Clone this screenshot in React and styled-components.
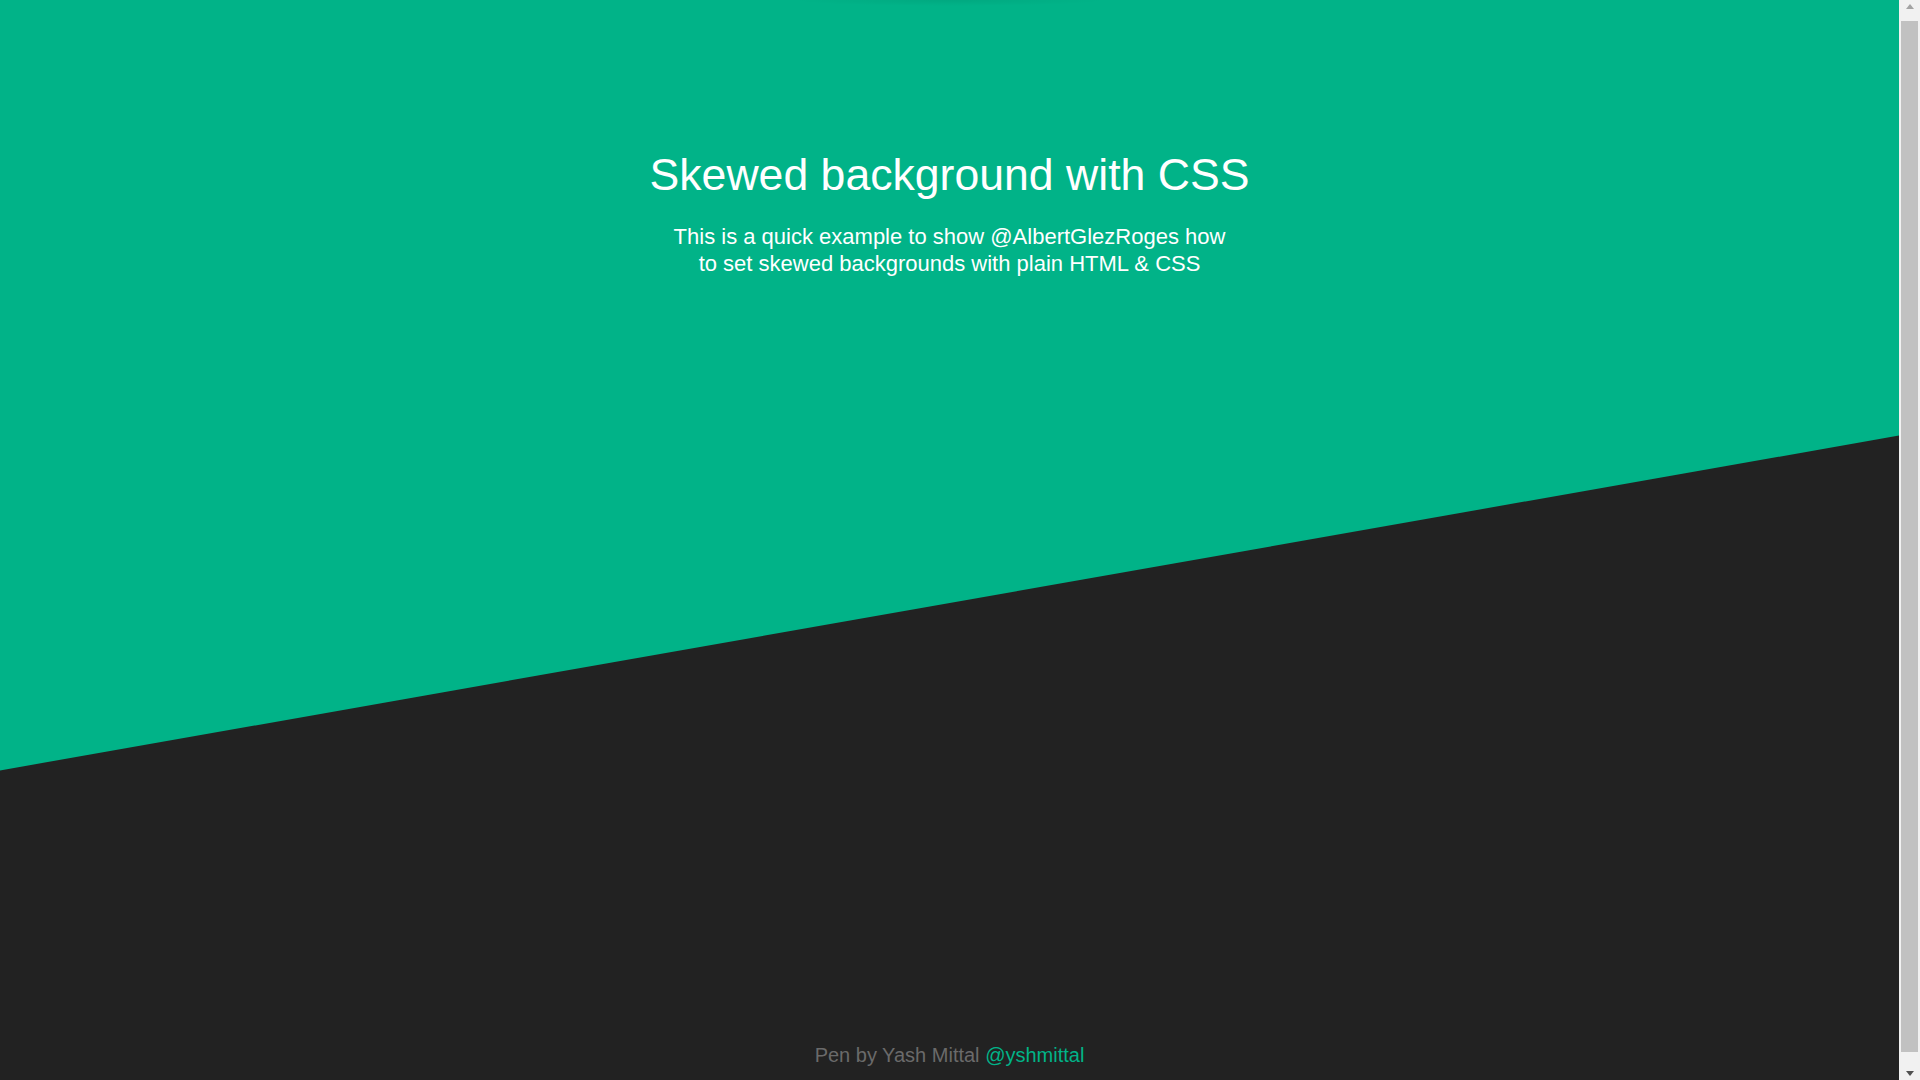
import styled, { createGlobalStyle } from "styled-components"

const GREEN = "#01b388"
const DARK = "#222222"

const GlobalStyle = createGlobalStyle`
    html, body {
        margin: 0;
        padding: 0;
        background: ${DARK};
        overflow: hidden;
    }

    body {
        font-family: "Liberation Sans", Arial, Helvetica, sans-serif;
    }
`

export default function App() {
    return (
        <Shell>
            <GlobalStyle />
            <Page>
                <Hero>
                    <Title>Skewed background with CSS</Title>
                    <Intro>
                        This is a quick example to show @AlbertGlezRoges how to set skewed backgrounds with plain HTML
                        &amp; CSS
                    </Intro>
                </Hero>
                <Footer>
                    Pen by Yash Mittal <a href="#">@yshmittal</a>
                </Footer>
            </Page>
            <ScrollBar>
                <Arrow $dir="up" />
                <Thumb />
                <Arrow $dir="down" />
            </ScrollBar>
        </Shell>
    )
}

const Shell = styled.div`
    display: flex;
    height: 100vh;
    overflow: hidden;
`

const Page = styled.div`
    flex: 1;
    box-sizing: border-box;
    min-height: 1110px;
    display: flex;
    flex-direction: column;
    background: ${DARK};
    color: #fff;
    overflow: hidden;
`

const Hero = styled.section`
    position: relative;
    box-sizing: border-box;
    height: 603px;
    padding-top: 149px;
    text-align: center;
    z-index: 0;

    &::before {
        content: "";
        position: absolute;
        top: -500px;
        left: 0;
        right: 0;
        bottom: 0;
        background: ${GREEN};
        transform: skewY(-10deg);
        transform-origin: 50% 100%;
        z-index: -1;
    }

    &::after {
        content: "";
        position: absolute;
        top: 0;
        left: 50%;
        width: 320px;
        height: 6px;
        margin-left: -160px;
        background: radial-gradient(ellipse at 50% 0%, rgba(0, 0, 0, 0.06), rgba(0, 0, 0, 0) 70%);
        z-index: -1;
    }
`

const Title = styled.h1`
    margin: 0;
    font-size: 44.6px;
    font-weight: normal;
    line-height: 1.15;
`

const Intro = styled.p`
    max-width: 560px;
    margin: 23px auto 0;
    font-size: 22px;
    line-height: 27px;
`

const Footer = styled.footer`
    margin-top: auto;
    padding-bottom: 43px;
    text-align: center;
    font-size: 20px;
    line-height: 23px;
    color: #6a6a6a;

    a {
        color: ${GREEN};
        text-decoration: none;
    }
`

const ScrollBar = styled.div`
    flex: 0 0 21px;
    display: flex;
    flex-direction: column;
    align-items: center;
    background: #f1f1f1;
`

const Arrow = styled.div`
    flex: 0 0 17px;
    width: 100%;
    display: flex;
    align-items: center;
    justify-content: center;

    &::before {
        content: "";
        width: 0;
        height: 0;
        border-left: 4.5px solid transparent;
        border-right: 4.5px solid transparent;
        ${(p) =>
            p.$dir === "up"
                ? "border-bottom: 5px solid #a3a3a3; margin-top: -4px;"
                : "border-top: 5px solid #505050; margin-top: 4px;"}
    }
`

const Thumb = styled.div`
    width: 17px;
    margin: 4px 0 11px;
    flex: 1;
    background: #c1c1c1;
`
